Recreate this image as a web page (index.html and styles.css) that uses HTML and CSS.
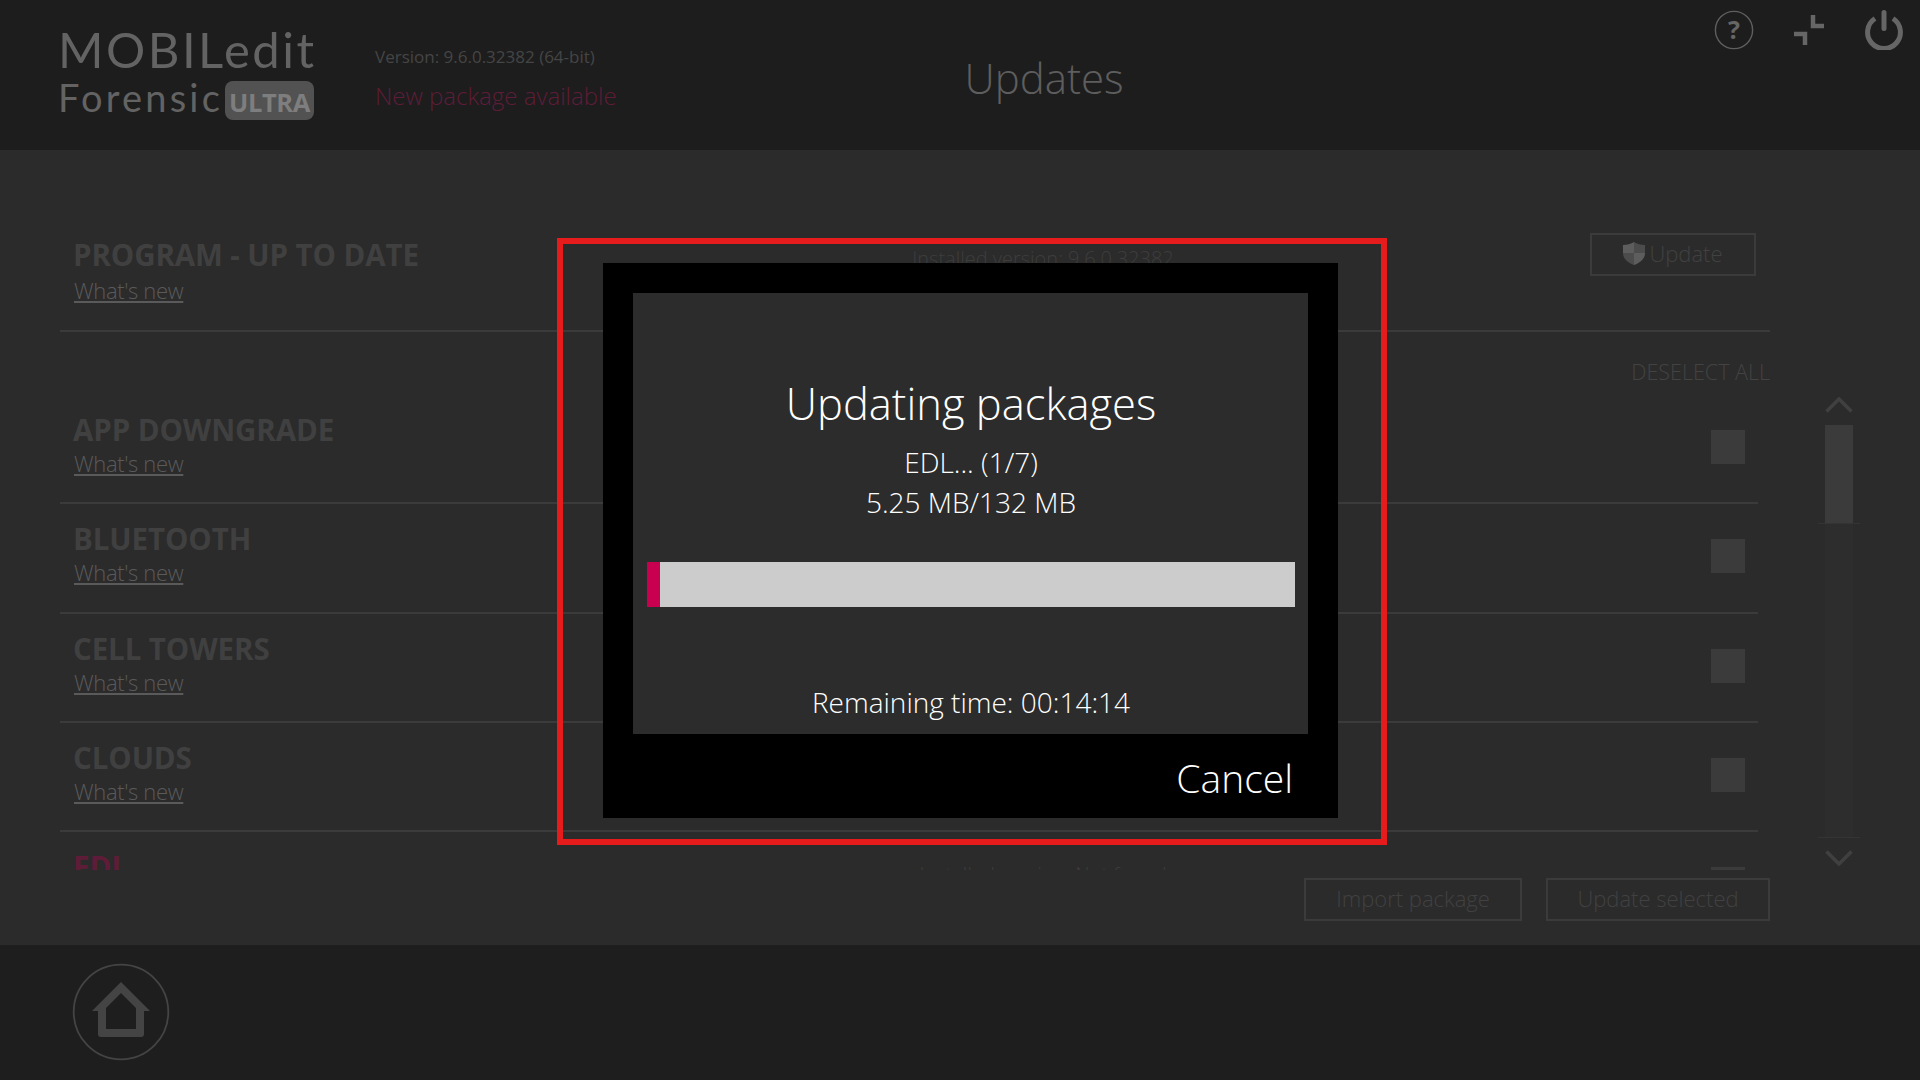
FILE: index.html
```html
<!DOCTYPE html>
<html lang="en">
<head>
    <meta charset="UTF-8">
    <title>MOBILedit Forensic - Updates</title>
    <link rel="stylesheet" href="styles.css">
</head>
<body>
    <header class="topbar">
        <div class="logo">
            <div class="logo-name">MOBILedit</div>
            <div class="logo-sub">
                <span class="logo-forensic">Forensic</span>
                <span class="logo-badge">ULTRA</span>
            </div>
        </div>
        <div class="app-info">
            <div class="app-version">Version: 9.6.0.32382 (64-bit)</div>
            <div class="app-notice">New package available</div>
        </div>
        <h1 class="page-title">Updates</h1>
        <div class="top-icons">
            <svg class="icon" viewBox="0 0 40 40">
                <circle cx="20" cy="20" r="18.6" fill="none" stroke="#5f5f5f" stroke-width="1.4"/>
                <text class="help-mark" x="20" y="29" text-anchor="middle">?</text>
            </svg>
            <svg class="icon" viewBox="0 0 40 40">
                <path d="M24 5V16H35M5 24H16V35" fill="none" stroke="#666" stroke-width="4.5"/>
            </svg>
            <svg class="icon" viewBox="0 0 40 40">
                <path d="M11 8.5A16.4 16.4 0 1 0 29 8.5" fill="none" stroke="#666" stroke-width="5"/>
                <path d="M20 2.5V18.5" fill="none" stroke="#666" stroke-width="5" stroke-linecap="round"/>
            </svg>
        </div>
    </header>

    <main class="content">
        <div class="packages">
            <section class="program-row">
                <div class="row-name">
                    <h2 class="row-title">PROGRAM - UP TO DATE</h2>
                    <a class="row-link">What's new</a>
                </div>
                <div class="row-version">Installed version: 9.6.0.32382</div>
                <button class="btn btn-update">
                    <svg class="shield" viewBox="0 0 22 23">
                        <path d="M11 0C8 2 4 3 0 3V11H11Z" fill="#5d5d5d"/>
                        <path d="M11 0C14 2 18 3 22 3V11H11Z" fill="#4c4c4c"/>
                        <path d="M0 11C0 17 5 21 11 23V11Z" fill="#4c4c4c"/>
                        <path d="M22 11C22 17 17 21 11 23V11Z" fill="#5d5d5d"/>
                    </svg>
                    Update
                </button>
            </section>

            <div class="select-bar">DESELECT ALL</div>

            <div class="list">
                <section class="row">
                    <div class="row-name">
                        <h2 class="row-title">APP DOWNGRADE</h2>
                        <a class="row-link">What's new</a>
                    </div>
                    <div class="row-check"></div>
                </section>
                <section class="row">
                    <div class="row-name">
                        <h2 class="row-title">BLUETOOTH</h2>
                        <a class="row-link">What's new</a>
                    </div>
                    <div class="row-check"></div>
                </section>
                <section class="row">
                    <div class="row-name">
                        <h2 class="row-title">CELL TOWERS</h2>
                        <a class="row-link">What's new</a>
                    </div>
                    <div class="row-check"></div>
                </section>
                <section class="row">
                    <div class="row-name">
                        <h2 class="row-title">CLOUDS</h2>
                        <a class="row-link">What's new</a>
                    </div>
                    <div class="row-check"></div>
                </section>
                <section class="row row-new">
                    <div class="row-name">
                        <h2 class="row-title">EDL</h2>
                        <a class="row-link">What's new</a>
                    </div>
                    <div class="row-version">Installed version: Not found</div>
                    <div class="row-check"></div>
                </section>
            </div>

            <div class="actions">
                <button class="btn btn-import">Import package</button>
                <button class="btn btn-selected">Update selected</button>
            </div>
        </div>

        <div class="scrollbar">
            <svg class="chevron" viewBox="0 0 28 16">
                <path d="M1.5 14.5L14 2L26.5 14.5" fill="none" stroke="#404040" stroke-width="3.5"/>
            </svg>
            <div class="scroll-track">
                <div class="scroll-thumb"></div>
            </div>
            <svg class="chevron" viewBox="0 0 28 16">
                <path d="M1.5 1.5L14 14L26.5 1.5" fill="none" stroke="#404040" stroke-width="3.5"/>
            </svg>
        </div>
    </main>

    <footer class="bottombar">
        <svg class="home" viewBox="0 0 98 98">
            <circle cx="49" cy="49" r="47.3" fill="none" stroke="#444" stroke-width="1.8"/>
            <path fill="#444" fill-rule="evenodd" d="M49 19L78 48H72V71Q72 74 69 74H29Q26 74 26 71V48H20ZM49 30L34 45V66H64V45Z"/>
        </svg>
    </footer>

    <!-- update dialog, over the dimmed page -->
    <div class="frame"></div>
    <div class="dialog">
        <div class="dialog-panel">
            <h2 class="dialog-title">Updating packages</h2>
            <div class="dialog-line dialog-line-first">EDL... (1/7)</div>
            <div class="dialog-line">5.25 MB/132 MB</div>
            <div class="progress">
                <div class="progress-fill" style="width: 2%"></div>
            </div>
            <div class="dialog-line dialog-time">Remaining time: 00:14:14</div>
        </div>
        <div class="dialog-foot">
            <span class="dialog-cancel">Cancel</span>
        </div>
    </div>
</body>
</html>
```

FILE: styles.css
```css
* {
    box-sizing: border-box;
}

body {
    margin: 0;
    width: 1920px;
    height: 1080px;
    overflow: hidden;
    display: flex;
    flex-direction: column;
    background: #2b2b2b;
    font-family: "Open Sans", "Noto Sans", sans-serif;
    font-weight: 300;
    color: #fff;
}

/* top bar */
.topbar {
    height: 150px;
    flex: none;
    display: flex;
    padding: 0 16px 0 60px;
    background: #1d1d1d;
}

.logo {
    width: 254px;
    padding-top: 21px;
    font-family: Lato, sans-serif;
    font-weight: 400;
    color: #636363;
}

.logo-name {
    margin-left: -2px;
    font-size: 49px;
    line-height: 56px;
    letter-spacing: 2.5px;
    white-space: nowrap;
}

.logo-sub {
    display: flex;
    justify-content: space-between;
    align-items: center;
    margin-top: 4px;
}

.logo-forensic {
    margin: -7px 0 0 -2px;
    font-size: 38px;
    line-height: 42px;
    letter-spacing: 3.2px;
}

.logo-badge {
    width: 89px;
    height: 39px;
    border-radius: 8px;
    background: #525252;
    color: #7e7e7e;
    font-family: "Open Sans", sans-serif;
    font-size: 25.5px;
    font-weight: 700;
    line-height: 43px;
    text-align: center;
    letter-spacing: -0.4px;
}

.app-info {
    width: 300px;
    margin-left: 61px;
    padding-top: 45px;
}

.app-version {
    font-size: 17px;
    line-height: 24px;
    font-weight: 400;
    color: #454545;
}

.app-notice {
    margin-top: 11px;
    font-size: 24px;
    line-height: 32px;
    color: #5f1c38;
}

.page-title {
    width: 738px;
    margin: 51px 0 0;
    font-size: 42px;
    line-height: 54px;
    font-weight: 300;
    text-align: center;
    color: #5e5e5e;
}

.top-icons {
    display: flex;
    gap: 35px;
    margin-left: auto;
    padding-top: 10px;
}

.icon {
    width: 40px;
    height: 40px;
}

.help-mark {
    font-size: 25px;
    font-weight: 700;
    fill: #666;
}

/* content */
.content {
    flex: 1;
    display: flex;
    padding-left: 60px;
}

.packages {
    width: 1710px;
}

.program-row {
    height: 182px;
    display: grid;
    grid-template-columns: 700px 538px 1fr;
    padding: 86px 14px 0 14px;
    border-bottom: 2px solid #3b3b3b;
}

.program-row .row-link {
    margin-top: 2px;
}

.program-row .row-version {
    margin-top: 8px;
}

.row-title {
    margin: 0 0 0 -1px;
    font-size: 29.5px;
    line-height: 37px;
    font-weight: 700;
    letter-spacing: -0.1px;
    color: #404040;
    white-space: nowrap;
}

.row-link {
    display: inline-block;
    font-size: 22px;
    line-height: 30px;
    color: #5a5a5a;
    text-decoration: underline;
    letter-spacing: -0.35px;
}

.row-version {
    font-size: 20px;
    line-height: 30px;
    text-align: center;
    color: #3d3d3d;
    white-space: nowrap;
}

.btn {
    height: 43px;
    padding: 0 0 3px;
    background: none;
    border: 2px solid #3b3b3b;
    color: #414141;
    font-family: inherit;
    font-size: 22px;
    font-weight: 300;
}

.btn-update {
    width: 166px;
    margin: -3px 0 0 278px;
    display: flex;
    align-items: center;
    justify-content: center;
    gap: 4px;
}

.shield {
    width: 22px;
    height: 23px;
}

.select-bar {
    height: 63px;
    padding-top: 26px;
    font-size: 21.5px;
    line-height: 28px;
    text-align: right;
    color: #434343;
}

.list {
    width: 1698px;
    height: 475px;
    overflow: hidden;
}

.row {
    height: 109.33px;
    display: grid;
    grid-template-columns: 700px 538px 1fr;
    padding: 16px 13px 0 14px;
    border-bottom: 2px solid #3b3b3b;
}

.row-check {
    grid-column: 3;
    width: 34px;
    height: 34px;
    margin: 19px 0 0 auto;
    background: #3b3b3b;
}

.row-new .row-title {
    color: #5f1c38;
}

.row-new .row-version {
    grid-column: 2;
    margin-top: 12px;
}

.actions {
    display: flex;
    justify-content: flex-end;
    gap: 24px;
    padding-top: 8px;
}

.btn-import {
    width: 218px;
}

.btn-selected {
    width: 224px;
}

/* scrollbar */
.scrollbar {
    width: 42px;
    margin: 247px 0 0 48px;
    display: flex;
    flex-direction: column;
    align-items: center;
}

.chevron {
    width: 28px;
    height: 16px;
    flex: none;
}

.scroll-track {
    position: relative;
    width: 28px;
    height: 413px;
    margin: 12px 0;
    background: #2d2d2d;
}

.scroll-thumb {
    position: relative;
    width: 28px;
    height: 99px;
    background: #3b3b3b;
}

.scroll-thumb::after,
.scroll-track::after {
    content: '';
    position: absolute;
    left: -7px;
    bottom: 0;
    width: 42px;
    height: 1px;
    background: #343434;
}

/* bottom bar */
.bottombar {
    height: 135px;
    flex: none;
    padding: 18px 0 0 72px;
    background: #1e1e1e;
}

.home {
    display: block;
    width: 98px;
    height: 98px;
}

/* dialog overlay */
.frame {
    position: absolute;
    left: 557px;
    top: 238px;
    width: 830px;
    height: 607px;
    border: 6px solid #e61c1c;
}

.dialog {
    position: absolute;
    left: 603px;
    top: 263px;
    width: 735px;
    height: 555px;
    padding: 30px 30px 0;
    background: #000;
}

.dialog-panel {
    height: 441px;
    padding: 0 13px 0 14px;
    background: #2c2c2c;
    text-align: center;
}

.dialog-title {
    margin: 0;
    padding-top: 82px;
    font-size: 43.5px;
    line-height: 58px;
    font-weight: 300;
}

.dialog-line {
    font-size: 28px;
    line-height: 40px;
}

.dialog-line-first {
    margin-top: 9px;
}

.progress {
    height: 45px;
    margin: 40px 0 0;
    background: #ccc;
}

.progress-fill {
    height: 100%;
    background: #c8004f;
}

.dialog-time {
    margin-top: 75px;
}

.dialog-foot {
    padding: 19px 15px 0 0;
    text-align: right;
}

.dialog-cancel {
    font-size: 39px;
    line-height: 50px;
}
```
